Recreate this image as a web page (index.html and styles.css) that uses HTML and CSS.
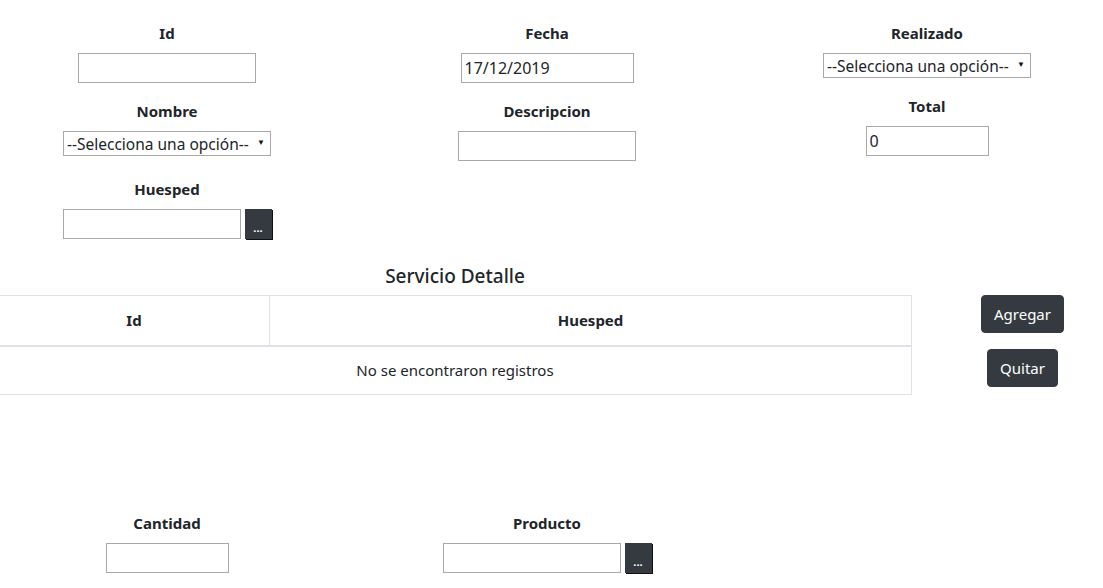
FILE: index.html
```html
<!DOCTYPE html>
<html lang="es">
<head>
<meta charset="utf-8">
<title>Servicio</title>
<link rel="stylesheet" href="styles.css">
</head>
<body>
<div class="form-row top">
  <div class="col">
    <div class="group">
      <label class="lbl">Id</label>
      <input class="inp w178" type="text">
    </div>
    <div class="group group-sel">
      <label class="lbl">Nombre</label>
      <div class="sel-wrap"><select class="sel"><option>--Selecciona una opción--</option></select></div>
    </div>
    <div class="group">
      <label class="lbl">Huesped</label>
      <div class="with-btn">
        <input class="inp w178" type="text">
        <button class="dots">...</button>
      </div>
    </div>
  </div>
  <div class="col">
    <div class="group">
      <label class="lbl">Fecha</label>
      <input class="inp w173" type="text" value="17/12/2019">
    </div>
    <div class="group">
      <label class="lbl">Descripcion</label>
      <input class="inp w178" type="text">
    </div>
  </div>
  <div class="col">
    <div class="group">
      <label class="lbl">Realizado</label>
      <div class="sel-wrap"><select class="sel"><option>--Selecciona una opción--</option></select></div>
    </div>
    <div class="group">
      <label class="lbl">Total</label>
      <input class="inp w123" type="text" value="0">
    </div>
  </div>
</div>

<div class="detail">
  <div class="table-side">
    <h4 class="title">Servicio Detalle</h4>
    <table class="tbl">
      <thead>
        <tr><th class="c-id">Id</th><th>Huesped</th></tr>
      </thead>
      <tbody>
        <tr><td colspan="2">No se encontraron registros</td></tr>
      </tbody>
    </table>
  </div>
  <div class="actions">
    <button class="btn">Agregar</button>
    <button class="btn">Quitar</button>
  </div>
</div>

<div class="form-row bottom">
  <div class="col">
    <div class="group">
      <label class="lbl">Cantidad</label>
      <input class="inp w123" type="text">
    </div>
  </div>
  <div class="col">
    <div class="group">
      <label class="lbl">Producto</label>
      <div class="with-btn">
        <input class="inp w178" type="text">
        <button class="dots">...</button>
      </div>
    </div>
  </div>
</div>
</body>
</html>
```
FILE: styles.css
```css
* { box-sizing: border-box; }
html, body { margin: 0; padding: 0; background: #fff; overflow: hidden; }
body {
  font-family: "Noto Sans", "Open Sans", sans-serif;
  color: #212529;
  font-size: 16px;
  line-height: 24px;
}
.form-row {
  display: flex;
  margin-left: -23px;
}
.top { padding-top: 21px; }
.col {
  width: 380px;
  flex-shrink: 0;
  display: flex;
  flex-direction: column;
  align-items: center;
}
.group {
  display: flex;
  flex-direction: column;
  align-items: center;
  margin-bottom: 16px;
}
.group-sel { margin-bottom: 21px; }
.lbl {
  font-weight: 700;
  font-size: 15px;
  line-height: 24px;
  margin-bottom: 8px;
}
.inp {
  height: 30px;
  border: 1px solid #a9a9a9;
  padding: 1px 3px;
  font-family: "Noto Sans", sans-serif;
  font-size: 16px;
  color: #212529;
  background: #fff;
  outline: none;
}
.w178 { width: 178px; }
.w173 { width: 173px; }
.w123 { width: 123px; }
.with-btn {
  display: flex;
  gap: 4px;
}
.dots {
  width: 27px;
  height: 30px;
  border: none;
  border-radius: 0;
  background: #343a40;
  color: #fff;
  font-family: "Noto Sans", sans-serif;
  font-size: 11px;
  font-weight: 700;
  padding: 6px 0 0;
  box-shadow: 1px 1px 0 #111;
}
.sel-wrap {
  position: relative;
  width: 208px;
  height: 25px;
}
.sel {
  appearance: none;
  -webkit-appearance: none;
  width: 208px;
  height: 25px;
  border: 1px solid #a9a9a9;
  border-radius: 0;
  background: #fff;
  padding: 0 0 0 3px;
  font-family: "Noto Sans", sans-serif;
  font-size: 15.5px;
  color: #212529;
}
.sel-wrap::after {
  content: "▼";
  position: absolute;
  right: 6px;
  top: 0;
  font-size: 8px;
  line-height: 22px;
  color: #111;
  pointer-events: none;
}
.detail {
  display: flex;
  margin-top: 8px;
}
.table-side {
  width: 914px;
  flex-shrink: 0;
  margin-left: -2px;
  display: flex;
  flex-direction: column;
}
.title {
  margin: 0 0 6px;
  text-align: center;
  font-size: 19px;
  font-weight: 500;
  line-height: 26px;
}
.tbl {
  width: 914px;
  border-collapse: collapse;
  font-size: 15px;
}
.tbl th, .tbl td {
  border: 1px solid #dee2e6;
  text-align: center;
  line-height: 24px;
}
.tbl th { font-weight: 700; }
.tbl thead th { border-bottom: 2px solid #dee2e6; height: 50px; padding: 0 12px; }
.tbl td { height: 49px; padding: 0 12px; }
.c-id { width: 271px; }
.actions {
  flex: 1;
  padding-left: 30px;
  padding-top: 32px;
  display: flex;
  flex-direction: column;
  align-items: center;
  gap: 16px;
}
.btn {
  background: #343a40;
  color: #fff;
  border: 1px solid #343a40;
  border-radius: 4px;
  height: 38px;
  padding: 0 12px;
  font-family: "Noto Sans", sans-serif;
  font-size: 15px;
  line-height: 24px;
}
.bottom { margin-top: 116px; }
```
